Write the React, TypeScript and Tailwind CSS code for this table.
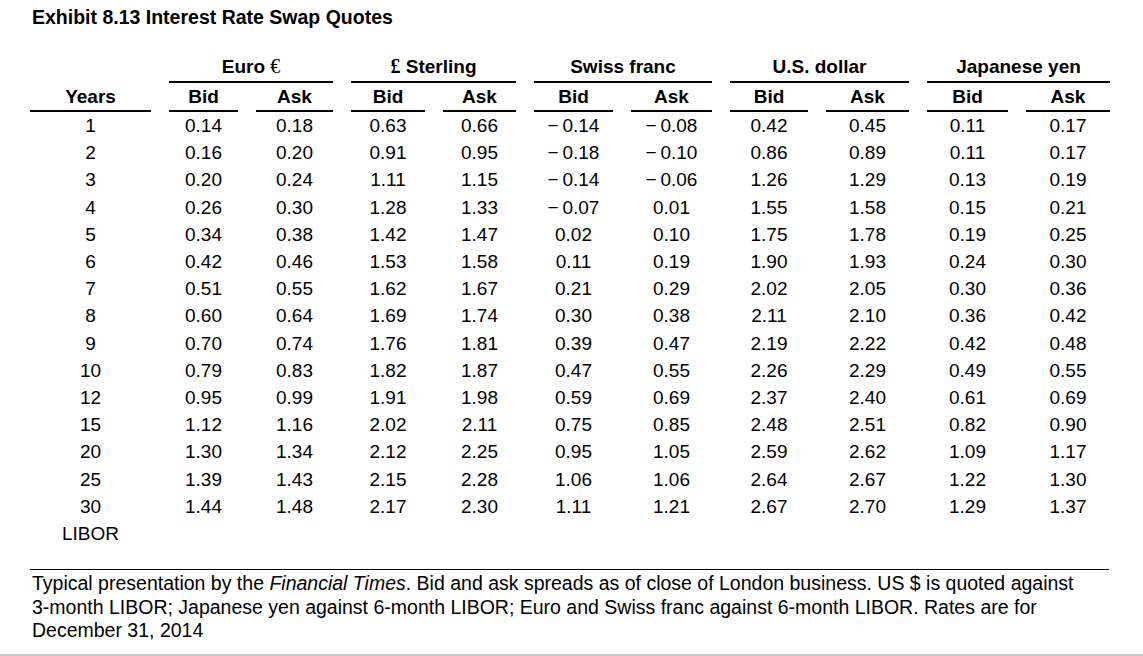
import React from "react";

// Exhibit 8.13 — swap quotes table, FT style.
const groups = ["Euro", "Sterling", "Swiss franc", "U.S. dollar", "Japanese yen"];

const rows: string[][] = [
  ["1", "0.14", "0.18", "0.63", "0.66", "−\u20090.14", "−\u20090.08", "0.42", "0.45", "0.11", "0.17"],
  ["2", "0.16", "0.20", "0.91", "0.95", "−\u20090.18", "−\u20090.10", "0.86", "0.89", "0.11", "0.17"],
  ["3", "0.20", "0.24", "1.11", "1.15", "−\u20090.14", "−\u20090.06", "1.26", "1.29", "0.13", "0.19"],
  ["4", "0.26", "0.30", "1.28", "1.33", "−\u20090.07", "0.01", "1.55", "1.58", "0.15", "0.21"],
  ["5", "0.34", "0.38", "1.42", "1.47", "0.02", "0.10", "1.75", "1.78", "0.19", "0.25"],
  ["6", "0.42", "0.46", "1.53", "1.58", "0.11", "0.19", "1.90", "1.93", "0.24", "0.30"],
  ["7", "0.51", "0.55", "1.62", "1.67", "0.21", "0.29", "2.02", "2.05", "0.30", "0.36"],
  ["8", "0.60", "0.64", "1.69", "1.74", "0.30", "0.38", "2.11", "2.10", "0.36", "0.42"],
  ["9", "0.70", "0.74", "1.76", "1.81", "0.39", "0.47", "2.19", "2.22", "0.42", "0.48"],
  ["10", "0.79", "0.83", "1.82", "1.87", "0.47", "0.55", "2.26", "2.29", "0.49", "0.55"],
  ["12", "0.95", "0.99", "1.91", "1.98", "0.59", "0.69", "2.37", "2.40", "0.61", "0.69"],
  ["15", "1.12", "1.16", "2.02", "2.11", "0.75", "0.85", "2.48", "2.51", "0.82", "0.90"],
  ["20", "1.30", "1.34", "2.12", "2.25", "0.95", "1.05", "2.59", "2.62", "1.09", "1.17"],
  ["25", "1.39", "1.43", "2.15", "2.28", "1.06", "1.06", "2.64", "2.67", "1.22", "1.30"],
  ["30", "1.44", "1.48", "2.17", "2.30", "1.11", "1.21", "2.67", "2.70", "1.29", "1.37"],
];

function GroupLabel({ name }: { name: string }) {
  if (name === "Euro") {
    return (
      <>
        Euro{" "}
        <span className="font-['Liberation_Serif',serif] font-normal text-[20px] leading-none">€</span>
      </>
    );
  }
  if (name === "Sterling") {
    return (
      <>
        <span className="font-['Liberation_Serif',serif] text-[20px] leading-none">£</span> Sterling
      </>
    );
  }
  return <>{name}</>;
}

export default function App() {
  return (
    <div className="w-[1143px] h-[656px] box-border border-b-2 border-[#c8c8c8] bg-white text-black font-['Liberation_Sans',Arial,sans-serif] overflow-hidden">
      <div className="pl-[32px] pt-[6px] text-[19.5px] leading-[22px] font-bold">
        Exhibit 8.13 Interest Rate Swap Quotes
      </div>

      <div className="ml-[30px] mt-[28px] grid grid-cols-[121px_69px_77px_74px_73px_79px_81px_78px_83px_81px_84px] gap-x-[18px] text-[19px]">
        {/* group header row */}
        <div />
        {groups.map((g) => (
          <div
            key={g}
            className="col-span-2 h-[27px] text-center font-bold leading-[22px] pb-[3px] border-b-2 border-black"
          >
            <GroupLabel name={g} />
          </div>
        ))}

        {/* Bid / Ask row */}
        <div className="text-center font-bold leading-[22px] pt-[3px] pb-[2px] border-b-2 border-black">
          Years
        </div>
        {groups.map((g) => (
          <React.Fragment key={g}>
            <div className="text-center font-bold leading-[22px] pt-[3px] pb-[2px] border-b-2 border-black">
              Bid
            </div>
            <div className="text-center font-bold leading-[22px] pt-[3px] pb-[2px] border-b-2 border-black">
              Ask
            </div>
          </React.Fragment>
        ))}

        {rows.map((r) =>
          r.map((v, i) => (
            <div key={r[0] + "-" + i} className="text-center leading-[27.2px] whitespace-pre">
              {v}
            </div>
          )),
        )}
        <div className="text-center leading-[27.2px]">LIBOR</div>
      </div>

      <div className="ml-[30px] mt-[22px] w-[1079px] border-t border-black pt-[2px] pl-[2px] text-[19.5px] leading-[23.5px] whitespace-nowrap">
        Typical presentation by the <i>Financial Times</i>. Bid and ask spreads as of close of London
        business. US $ is quoted against
        <br />
        3-month LIBOR; Japanese yen against 6-month LIBOR; Euro and Swiss franc against 6-month LIBOR.
        Rates are for
        <br />
        December 31, 2014
      </div>
    </div>
  );
}
